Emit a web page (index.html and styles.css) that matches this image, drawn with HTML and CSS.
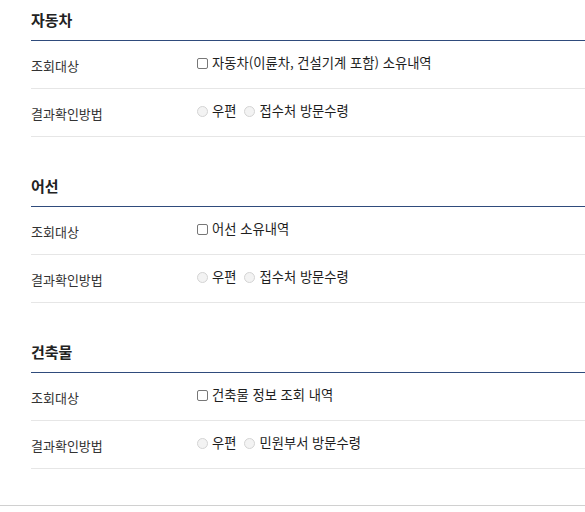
FILE: index.html
```html
<!DOCTYPE html>
<html lang="ko">
<head>
    <meta charset="UTF-8">
    <meta name="viewport" content="width=device-width, initial-scale=1.0">
    <title>조회 대상 선택</title>
    <link rel="stylesheet" href="styles.css">
</head>
<body>
    <div class="wrap">
        <div class="section">
            <h3 class="section-title">자동차</h3>
            <div class="row">
                <div class="row-label">조회대상</div>
                <div class="row-value">
                    <label class="opt"><input type="checkbox" class="chk"> 자동차(이륜차, 건설기계 포함) 소유내역</label>
                </div>
            </div>
            <div class="row">
                <div class="row-label">결과확인방법</div>
                <div class="row-value">
                    <label class="opt"><input type="radio" name="car" class="rad" disabled> 우편</label>
                    <label class="opt"><input type="radio" name="car" class="rad" disabled> 접수처 방문수령</label>
                </div>
            </div>
        </div>

        <div class="section">
            <h3 class="section-title">어선</h3>
            <div class="row">
                <div class="row-label">조회대상</div>
                <div class="row-value">
                    <label class="opt"><input type="checkbox" class="chk"> 어선 소유내역</label>
                </div>
            </div>
            <div class="row">
                <div class="row-label">결과확인방법</div>
                <div class="row-value">
                    <label class="opt"><input type="radio" name="ship" class="rad" disabled> 우편</label>
                    <label class="opt"><input type="radio" name="ship" class="rad" disabled> 접수처 방문수령</label>
                </div>
            </div>
        </div>

        <div class="section">
            <h3 class="section-title">건축물</h3>
            <div class="row">
                <div class="row-label">조회대상</div>
                <div class="row-value">
                    <label class="opt"><input type="checkbox" class="chk"> 건축물 정보 조회 내역</label>
                </div>
            </div>
            <div class="row">
                <div class="row-label">결과확인방법</div>
                <div class="row-value">
                    <label class="opt"><input type="radio" name="bld" class="rad" disabled> 우편</label>
                    <label class="opt"><input type="radio" name="bld" class="rad" disabled> 민원부서 방문수령</label>
                </div>
            </div>
        </div>
    </div>
    <div class="footer-line"></div>
</body>
</html>
```
FILE: styles.css
```css
body {
    margin: 0;
    font-family: "Noto Sans CJK KR", "Noto Sans", sans-serif;
    font-size: 13px;
    color: #333;
    background: #fff;
}

.wrap {
    padding-left: 31px;
}

.section {
    margin-top: 29px;
}

.section:first-child {
    margin-top: 0;
}

.section-title {
    margin: 0;
    padding: 9px 0;
    line-height: 22px;
    font-size: 15px;
    font-weight: bold;
    color: #222;
    border-bottom: 1px solid #2f4b7c;
}

.row {
    display: flex;
    align-items: flex-start;
    height: 47px;
    border-bottom: 1px solid #e6e6e6;
}

.row-label {
    width: 166px;
    padding-top: 15px;
    line-height: 20px;
}

.row-value {
    display: flex;
    gap: 8px;
    padding-top: 12px;
    line-height: 20px;
    font-size: 13.3px;
    color: #1e1e1e;
}

.opt {
    display: flex;
    align-items: center;
    gap: 4px;
}

.chk {
    appearance: none;
    width: 11px;
    height: 11px;
    margin: 1px 0 0;
    border: 1px solid #777;
    border-radius: 2px;
    background: #fff;
}

.rad {
    appearance: none;
    width: 11px;
    height: 11px;
    margin: 1px 0 0;
    border: 1px solid #d4d4d4;
    border-radius: 50%;
    background: #f3f3f3;
}

.footer-line {
    margin-top: 36px;
    border-top: 1px solid #d0d0d0;
}
```
